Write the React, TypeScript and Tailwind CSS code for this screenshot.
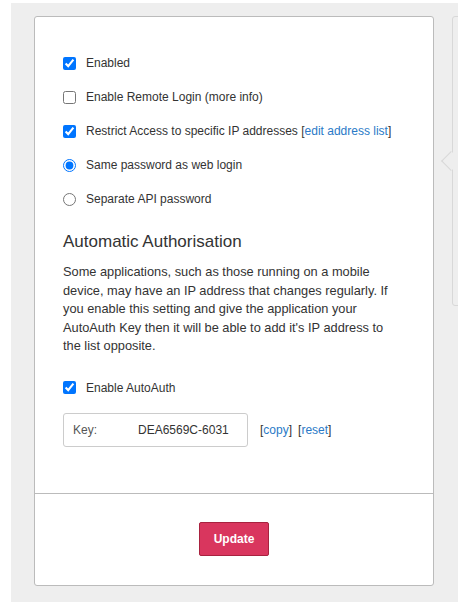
import React from "react";

function Check({ checked, label }: { checked?: boolean; label: React.ReactNode }) {
  return (
    <label className="flex items-center h-[20px]">
      <input type="checkbox" defaultChecked={checked} className="m-0 w-[13px] h-[13px] shrink-0 accent-[#0075ff]" />
      <span className="ml-[10px] whitespace-nowrap">{label}</span>
    </label>
  );
}

function Radio({ checked, label }: { checked?: boolean; label: React.ReactNode }) {
  return (
    <label className="flex items-center h-[20px]">
      <input type="radio" name="pw" defaultChecked={checked} className="m-0 w-[13px] h-[13px] shrink-0 accent-[#0075ff]" />
      <span className="ml-[10px] whitespace-nowrap">{label}</span>
    </label>
  );
}

export default function App() {
  return (
    <div className="bg-white w-[458px] h-[602px] pt-[3px] pl-[11px] font-['Liberation_Sans',Arial,sans-serif] text-[12px] text-[#333]">
      <div className="bg-[#eeeeee] h-[599px] flex items-start pt-[13px] pl-[23px] overflow-hidden">
        <div className="w-[400px] shrink-0 h-[570px] bg-white border border-[#bbbbbb] rounded-[3px] flex flex-col">
          <div className="px-[28px] pt-[36px] flex flex-col h-[477px] border-b border-[#bbbbbb]">
            <div className="flex flex-col gap-[14px]">
              <Check checked label="Enabled" />
              <Check label="Enable Remote Login (more info)" />
              <Check
                checked
                label={
                  <>
                    Restrict Access to specific IP addresses [<a className="text-[#2a7ac7]">edit address list</a>]
                  </>
                }
              />
              <Radio checked label="Same password as web login" />
              <Radio label="Separate API password" />
            </div>
            <h2 className="text-[17px] mt-[21px] leading-[24px]">Automatic Authorisation</h2>
            <p className="mt-[9px] w-[336px] leading-[18.5px] text-[12.8px]">
              Some applications, such as those running on a mobile device, may have an IP address that changes regularly. If you enable this setting and give the application your AutoAuth Key then it will be able to add it's IP address to the list opposite.
            </p>
            <div className="mt-[22px]">
              <Check checked label="Enable AutoAuth" />
            </div>
            <div className="flex items-center mt-[15px]">
              <div className="w-[185px] h-[34px] border border-[#cccccc] rounded-[3px] flex items-center pl-[9px]">
                <span className="text-[#555] w-[65px]">Key:</span>
                <span>DEA6569C-6031</span>
              </div>
              <span className="ml-[12px]">
                [<a className="text-[#2a7ac7]">copy</a>]
              </span>
              <span className="ml-[6px]">
                [<a className="text-[#2a7ac7]">reset</a>]
              </span>
            </div>
          </div>
          <div className="flex justify-center pt-[28px]">
            <button className="w-[70px] h-[34px] bg-[#d9365e] border border-[#a8223f] rounded-[2px] text-white font-bold text-[12px]">
              Update
            </button>
          </div>
        </div>
        <div className="ml-[18px] shrink-0 w-[20px] h-[290px] bg-[#eeeeee] border border-[#d8d8d8] rounded-[3px] relative">
          <div className="absolute left-[-9px] top-[137px] w-[14px] h-[14px] rotate-45 bg-[#eeeeee] border-l border-b border-[#d8d8d8]" />
        </div>
      </div>
    </div>
  );
}
